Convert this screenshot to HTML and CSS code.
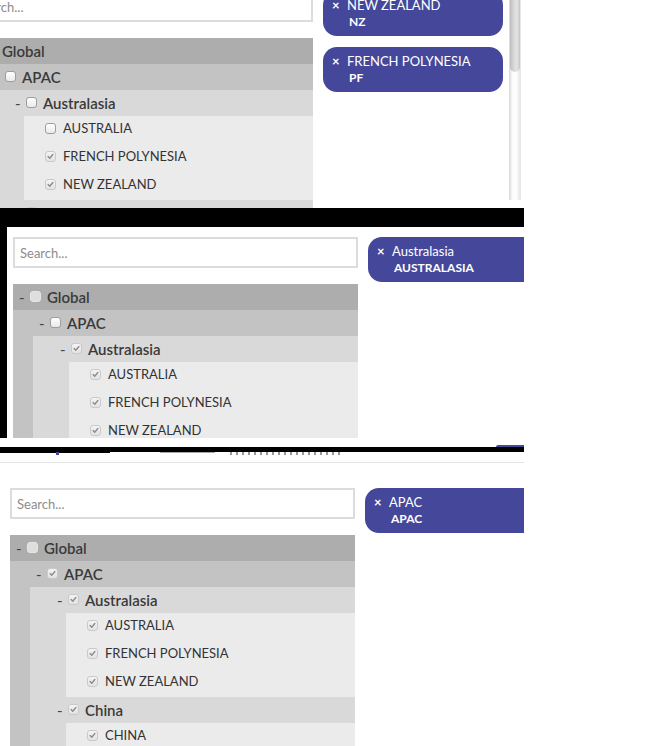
FILE: index.html
```html
<!DOCTYPE html>
<html>
<head>
<meta charset="utf-8">
<title>Tree select</title>
<link rel="stylesheet" href="styles.css">
</head>
<body>
<div class="shots">

  <!-- Shot 1 -->
  <section class="shot s1">
    <div class="widget w1">
      <div class="left">
        <input class="search" type="text" placeholder="Search...">
        <div class="tree">
          <div class="row r0"><span class="dash">-</span><span class="cb fill"></span><span class="lbl">Global</span></div>
          <div class="kids k0">
            <div class="row r1"><span class="dash">-</span><span class="cb"></span><span class="lbl">APAC</span></div>
            <div class="kids k1">
              <div class="row r2"><span class="dash">-</span><span class="cb"></span><span class="lbl">Australasia</span></div>
              <div class="leaves">
                <div class="leaf"><span class="cb"></span><span class="ltxt">AUSTRALIA</span></div>
                <div class="leaf"><span class="cb on"><svg viewBox="0 0 11 11"><path d="M2.6 5.6l2 2 3.8-4.6"/></svg></span><span class="ltxt">FRENCH POLYNESIA</span></div>
                <div class="leaf"><span class="cb on"><svg viewBox="0 0 11 11"><path d="M2.6 5.6l2 2 3.8-4.6"/></svg></span><span class="ltxt">NEW ZEALAND</span></div>
              </div>
              <div class="row r2"><span class="dash">-</span><span class="cb on"></span><span class="lbl">China</span></div>
            </div>
          </div>
        </div>
      </div>
      <div class="right">
        <div class="tag"><span class="x">×</span><div class="tt"><div class="tl">NEW ZEALAND</div><div class="tc">NZ</div></div></div>
        <div class="tag"><span class="x">×</span><div class="tt"><div class="tl">FRENCH POLYNESIA</div><div class="tc">PF</div></div></div>
      </div>
    </div>
    <div class="sbar"><div class="thumb"></div></div>
  </section>

  <!-- Shot 2 -->
  <section class="shot s2">
    <div class="widget">
      <div class="left">
        <input class="search" type="text" placeholder="Search...">
        <div class="tree">
          <div class="row r0"><span class="dash">-</span><span class="cb fill"></span><span class="lbl">Global</span></div>
          <div class="kids k0">
            <div class="row r1"><span class="dash">-</span><span class="cb"></span><span class="lbl">APAC</span></div>
            <div class="kids k1">
              <div class="row r2"><span class="dash">-</span><span class="cb on"><svg viewBox="0 0 11 11"><path d="M2.6 5.6l2 2 3.8-4.6"/></svg></span><span class="lbl">Australasia</span></div>
              <div class="leaves">
                <div class="leaf"><span class="cb on"><svg viewBox="0 0 11 11"><path d="M2.6 5.6l2 2 3.8-4.6"/></svg></span><span class="ltxt">AUSTRALIA</span></div>
                <div class="leaf"><span class="cb on"><svg viewBox="0 0 11 11"><path d="M2.6 5.6l2 2 3.8-4.6"/></svg></span><span class="ltxt">FRENCH POLYNESIA</span></div>
                <div class="leaf"><span class="cb on"><svg viewBox="0 0 11 11"><path d="M2.6 5.6l2 2 3.8-4.6"/></svg></span><span class="ltxt">NEW ZEALAND</span></div>
              </div>
            </div>
          </div>
        </div>
      </div>
      <div class="right">
        <div class="tag"><span class="x">×</span><div class="tt"><div class="tl">Australasia</div><div class="tc">AUSTRALASIA</div></div></div>
      </div>
    </div>
  </section>

  <!-- Seam between shots -->
  <div class="seam">
    <div class="seam-gap"><span class="peek"></span></div>
    <div class="seam-black"></div>
    <div class="seam-frag">
      <span class="fk f1"></span><span class="fp"></span><span class="fk f2"></span>
      <span class="fg"></span><span class="ft"></span>
    </div>
  </div>

  <!-- Shot 3 -->
  <section class="shot s3">
    <div class="widget">
      <div class="left">
        <input class="search" type="text" placeholder="Search...">
        <div class="tree">
          <div class="row r0"><span class="dash">-</span><span class="cb fill"></span><span class="lbl">Global</span></div>
          <div class="kids k0">
            <div class="row r1"><span class="dash">-</span><span class="cb on"><svg viewBox="0 0 11 11"><path d="M2.6 5.6l2 2 3.8-4.6"/></svg></span><span class="lbl">APAC</span></div>
            <div class="kids k1">
              <div class="row r2"><span class="dash">-</span><span class="cb on"><svg viewBox="0 0 11 11"><path d="M2.6 5.6l2 2 3.8-4.6"/></svg></span><span class="lbl">Australasia</span></div>
              <div class="leaves">
                <div class="leaf"><span class="cb on"><svg viewBox="0 0 11 11"><path d="M2.6 5.6l2 2 3.8-4.6"/></svg></span><span class="ltxt">AUSTRALIA</span></div>
                <div class="leaf"><span class="cb on"><svg viewBox="0 0 11 11"><path d="M2.6 5.6l2 2 3.8-4.6"/></svg></span><span class="ltxt">FRENCH POLYNESIA</span></div>
                <div class="leaf"><span class="cb on"><svg viewBox="0 0 11 11"><path d="M2.6 5.6l2 2 3.8-4.6"/></svg></span><span class="ltxt">NEW ZEALAND</span></div>
              </div>
              <div class="row r2"><span class="dash">-</span><span class="cb on"><svg viewBox="0 0 11 11"><path d="M2.6 5.6l2 2 3.8-4.6"/></svg></span><span class="lbl">China</span></div>
              <div class="leaves">
                <div class="leaf"><span class="cb on"><svg viewBox="0 0 11 11"><path d="M2.6 5.6l2 2 3.8-4.6"/></svg></span><span class="ltxt">CHINA</span></div>
              </div>
            </div>
          </div>
        </div>
      </div>
      <div class="right">
        <div class="tag"><span class="x">×</span><div class="tt"><div class="tl">APAC</div><div class="tc">APAC</div></div></div>
      </div>
    </div>
  </section>

</div>
</body>
</html>
```

FILE: styles.css
```css
* { box-sizing: border-box; }

html, body {
  margin: 0;
  padding: 0;
  background: #ffffff;
  overflow: hidden;
}

body {
  font-family: Lato, "Open Sans", "Liberation Sans", sans-serif;
  color: #333333;
  width: 662px;
  height: 746px;
}

.shots {
  width: 524px;
}

.shot {
  overflow: hidden;
  width: 524px;
  background: #ffffff;
}

/* ---------- shot frames ---------- */
.s1 {
  height: 208px;
  display: flex;
  align-items: flex-start;
}

.s2 {
  height: 230px;
  border-top: 19px solid #000000;
  border-left: 7px solid #000000;
  padding: 10px 0 0 6px;
}

.s3 {
  height: 284px;
  border-top: 1px solid #e4e4e4;
  padding: 25px 0 0 10px;
}

/* ---------- widget ---------- */
.widget {
  display: flex;
  align-items: flex-start;
  flex-shrink: 0;
  width: 560px;
}

.w1 {
  width: 535px;
  margin-top: -9px;
  margin-left: -32px;
}

.left {
  width: 345px;
  flex-shrink: 0;
}

.right {
  width: 180px;
  margin-left: 10px;
  flex-shrink: 0;
  display: flex;
  flex-direction: column;
  gap: 11px;
}

.search {
  display: block;
  width: 345px;
  height: 31px;
  margin: 0 0 16px 0;
  border: 2px solid #dcdcdc;
  border-radius: 0;
  padding: 0 0 0 5px;
  font-family: Lato, "Open Sans", sans-serif;
  font-size: 13px;
  color: #333;
  background: #fff;
  outline: none;
}

.w1 .search {
  padding-left: 6px;
}

.search::placeholder {
  color: #8c8c8c;
}

/* ---------- tree ---------- */
.tree {
  width: 345px;
}

.row {
  display: flex;
  align-items: center;
  height: 26px;
  padding-bottom: 1px;
  font-family: "Lato Semibold", Lato, "Open Sans", sans-serif;
  font-size: 15px;
  font-weight: 600;
  color: #3a3a3a;
}

.r0 { background: #adadad; padding-left: 6px; }
.r1 { background: #c3c3c3; padding-left: 26px; }
.r2 { background: #d9d9d9; padding-left: 27px; }

.kids.k0 { background: #c3c3c3; }
.kids.k1 { background: #d9d9d9; margin-left: 20px; }

.dash {
  width: 11px;
  font-family: Lato, sans-serif;
  font-weight: 400;
  font-size: 15px;
  color: #444;
}

.lbl {
  margin-left: 6px;
}

.leaves {
  margin-left: 36px;
  background: #ebebeb;
}

.leaf {
  display: flex;
  align-items: center;
  height: 28px;
  padding-left: 21px;
  padding-bottom: 4px;
  font-size: 13px;
  color: #333;
}

.ltxt {
  margin-left: 7px;
}

/* ---------- checkboxes ---------- */
.cb {
  width: 11px;
  height: 11px;
  flex-shrink: 0;
  border: 1px solid #9d9d9d;
  border-radius: 3px;
  background: linear-gradient(#ffffff, #e9e9e9);
  display: flex;
  align-items: center;
  justify-content: center;
}

.cb.on {
  border-color: #c9c9c9;
  background: linear-gradient(#f4f4f4, #e3e3e3);
}

.cb.fill {
  border-color: #e6e6e6;
  background: #dedede;
}

.cb svg {
  width: 11px;
  height: 11px;
  display: block;
}

.cb svg path {
  fill: none;
  stroke: #8c8c8c;
  stroke-width: 1.7;
  stroke-linecap: round;
  stroke-linejoin: round;
}

/* ---------- tags ---------- */
.tag {
  display: flex;
  align-items: flex-start;
  width: 180px;
  height: 45px;
  padding: 6px 10px 6px 9px;
  border-radius: 14px;
  background: #45489a;
  color: #ffffff;
}

.x {
  width: 15px;
  font-size: 13px;
  font-weight: 700;
  line-height: 16px;
}

.tl {
  font-size: 13px;
  line-height: 16px;
}

.tc {
  font-size: 12px;
  font-weight: 700;
  line-height: 17px;
  margin-left: 2px;
}

/* ---------- fake scrollbar in shot 1 ---------- */
.sbar {
  width: 12px;
  height: 200px;
  margin-left: 6px;
  flex-shrink: 0;
  background: linear-gradient(90deg, #e2e2e2, #fbfbfb 25%, #ffffff 60%, #e6e6e6);
  border-left: 1px solid #dcdcdc;
  border-right: 1px solid #e6e6e6;
}

.thumb {
  height: 72px;
  border-radius: 0 0 6px 6px;
  background: linear-gradient(90deg, #bdbdbd, #dadada 40%, #e4e4e4 70%, #c4c4c4);
}

/* ---------- seam between shots 2 and 3 ---------- */
.seam {
  width: 524px;
  height: 24px;
  background: #fff;
}

.seam-gap {
  height: 9px;
  display: flex;
  justify-content: flex-end;
  align-items: flex-end;
}

.peek {
  width: 28px;
  height: 2px;
  background: #45489a;
  border-radius: 10px 0 0 0;
}

.seam-black {
  height: 5px;
  background: #000;
}

.seam-frag {
  display: flex;
  align-items: flex-start;
  height: 4px;
}

.fk { height: 1px; background: #000; }
.f1 { width: 56px; }
.f2 { width: 51px; }
.fp { width: 3px; height: 3px; background: #45489a; }
.fg { width: 55px; height: 1px; margin-left: 50px; background: #a8a8a8; }
.ft {
  width: 112px;
  height: 3px;
  margin-left: 15px;
  background: repeating-linear-gradient(90deg, #555 0 2px, transparent 2px 6px);
  opacity: 0.6;
}
```
